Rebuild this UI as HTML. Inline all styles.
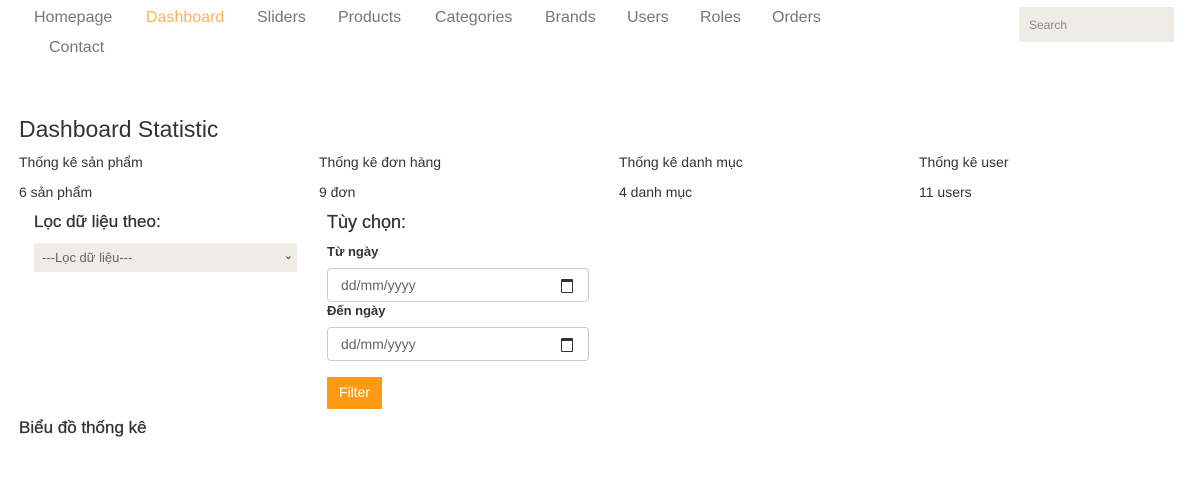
<!DOCTYPE html>
<html><head><meta charset="utf-8"><style>
body{margin:0;width:1195px;height:488px;background:#fff;font-family:"Liberation Sans","Noto Sans CJK SC",sans-serif;color:#333;position:relative;overflow:hidden}
.a{position:absolute;white-space:nowrap}
.nav{font-size:16px;color:#777;top:9px}
.s{font-size:14px;color:#333}
.inp{position:absolute;left:327px;width:262px;height:34px;border:1px solid #ccc;border-radius:4px;box-sizing:border-box}
.inp span{position:absolute;left:13px;top:8px;font-size:14px;color:#666}
.cal{position:absolute;right:15px;top:10px;width:10px;height:10px;border:1.5px solid #333;border-top-width:3px;border-radius:1px}
</style></head><body>
<div class="a nav" style="left:34px">Homepage</div>
<div class="a nav" style="left:146px;color:#ffb25a">Dashboard</div>
<div class="a nav" style="left:257px">Sliders</div>
<div class="a nav" style="left:338px">Products</div>
<div class="a nav" style="left:435px">Categories</div>
<div class="a nav" style="left:545px">Brands</div>
<div class="a nav" style="left:627px">Users</div>
<div class="a nav" style="left:700px">Roles</div>
<div class="a nav" style="left:772px">Orders</div>
<div class="a nav" style="left:49px;top:39px">Contact</div>
<div class="a" style="left:1019px;top:7px;width:155px;height:35px;background:#eeece5"><span style="position:absolute;left:10px;top:11px;font-size:12px;color:#888">Search</span></div>
<div class="a" style="left:19px;top:116px;font-size:23px;color:#333">Dashboard Statistic</div>
<div class="a s" style="left:19px;top:154px">Thống kê sản phẩm</div>
<div class="a s" style="left:319px;top:154px">Thống kê đơn hàng</div>
<div class="a s" style="left:619px;top:154px">Thống kê danh mục</div>
<div class="a s" style="left:919px;top:154px">Thống kê user</div>
<div class="a s" style="left:19px;top:184px">6 sản phẩm</div>
<div class="a s" style="left:319px;top:184px">9 đơn</div>
<div class="a s" style="left:619px;top:184px">4 danh mục</div>
<div class="a s" style="left:919px;top:184px">11 users</div>
<div class="a" style="left:34px;top:212px;font-size:17px;-webkit-text-stroke:0.3px #333">Lọc dữ liệu theo:</div>
<div class="a" style="left:34px;top:243px;width:263px;height:29px;background:#eeece5;font-size:13px;color:#666"><span style="position:absolute;left:8px;top:7px">---Lọc dữ liệu---</span><span style="position:absolute;right:4px;top:6px;font-size:11px;color:#333">&#8964;</span></div>
<div class="a" style="left:327px;top:212px;font-size:18px;-webkit-text-stroke:0.3px #333">Tùy chọn:</div>
<div class="a" style="left:327px;top:244px;font-size:13px;font-weight:bold">Từ ngày</div>
<div class="inp" style="top:268px"><span>dd/mm/yyyy</span><div class="cal"></div></div>
<div class="a" style="left:327px;top:303px;font-size:13px;font-weight:bold">Đến ngày</div>
<div class="inp" style="top:327px"><span>dd/mm/yyyy</span><div class="cal"></div></div>
<div class="a" style="left:327px;top:377px;width:55px;height:32px;background:#ff9a14;color:#fff;font-size:14px;text-align:center;line-height:30px">Filter</div>
<div class="a" style="left:19px;top:418px;font-size:17px;-webkit-text-stroke:0.3px #333">Biểu đồ thống kê</div>
</body></html>
